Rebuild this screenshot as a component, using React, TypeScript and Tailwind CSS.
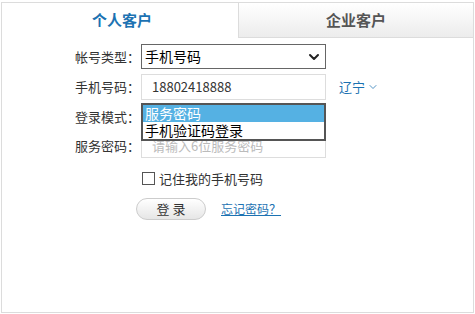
import { ChevronDown } from 'lucide-react';

const font = { fontFamily: '"Noto Sans CJK SC", "Liberation Sans", sans-serif' };

function Label(props: { text: string }) {
  return <span className="w-[66px] text-[13px] text-[#333]">{props.text}</span>;
}

function App() {
  return (
    <div className="min-h-[314px] bg-white pt-[2px] pl-[1px]" style={font}>
      <div className="h-[311px] w-[473px] border border-[#dcdcdc]">
        <div className="flex h-[35px]">
          <div className="flex w-[236px] items-center justify-center pl-[4px] text-[15px] font-bold text-[#1c72b2]">
            个人客户
          </div>
          <div className="flex flex-1 items-center justify-center border-b border-l border-[#dcdcdc] bg-gradient-to-b from-white to-[#ececec] text-[15px] font-bold text-[#555]">
            企业客户
          </div>
        </div>

        <div className="flex flex-col pl-[73px] pt-[6px]">
          <div className="flex h-[25px] items-center">
            <Label text="帐号类型：" />
            <div className="flex h-[25px] w-[185px] items-center justify-between border border-[#666] pl-[3px] pr-[3px] text-[14px] text-black">
              <span>手机号码</span>
              <ChevronDown size={16} strokeWidth={3} className="text-[#222]" />
            </div>
          </div>

          <div className="mt-[5px] flex h-[26px] items-center">
            <Label text="手机号码：" />
            <div className="flex h-[26px] w-[185px] items-center border border-[#ddd] pl-[10px] text-[13px] text-[#333]">
              18802418888
            </div>
            <span className="ml-[13px] flex items-center gap-[2px] text-[13px] text-[#1c72b2]">
              辽宁
              <ChevronDown size={12} strokeWidth={1.5} />
            </span>
          </div>

          <div className="relative mt-[4px] flex h-[25px] items-center">
            <Label text="登录模式：" />
            <div className="h-[25px] w-[185px] border border-[#666]" />
            <div className="absolute left-[66px] top-[-1px] w-[185px] border-2 border-[#555] bg-white text-[14px] leading-[17px]">
              <div className="bg-[#55b1e3] pl-[2px] text-white">服务密码</div>
              <div className="pl-[2px] text-black">手机验证码登录</div>
            </div>
          </div>

          <div className="mt-[4px] flex h-[25px] items-center">
            <Label text="服务密码：" />
            <div className="flex h-[25px] w-[185px] items-center border border-[#ddd] pl-[10px] text-[13px] text-[#bbb]">
              请输入6位服务密码
            </div>
          </div>

          <div className="mt-[11px] flex items-center pl-[67px] text-[13px] text-[#333]">
            <span className="mr-[4px] h-[13px] w-[13px] border border-[#555]" />
            记住我的手机号码
          </div>

          <div className="mt-[9px] flex items-center pl-[61px]">
            <button className="h-[22px] w-[70px] rounded-full border border-[#ccc] bg-gradient-to-b from-white to-[#e6e6e6] text-[13px] text-[#333]">
              登 录
            </button>
            <a className="ml-[15px] text-[12px] text-[#1c72b2] underline">忘记密码？</a>
          </div>
        </div>
      </div>
    </div>
  );
}

export default App;
